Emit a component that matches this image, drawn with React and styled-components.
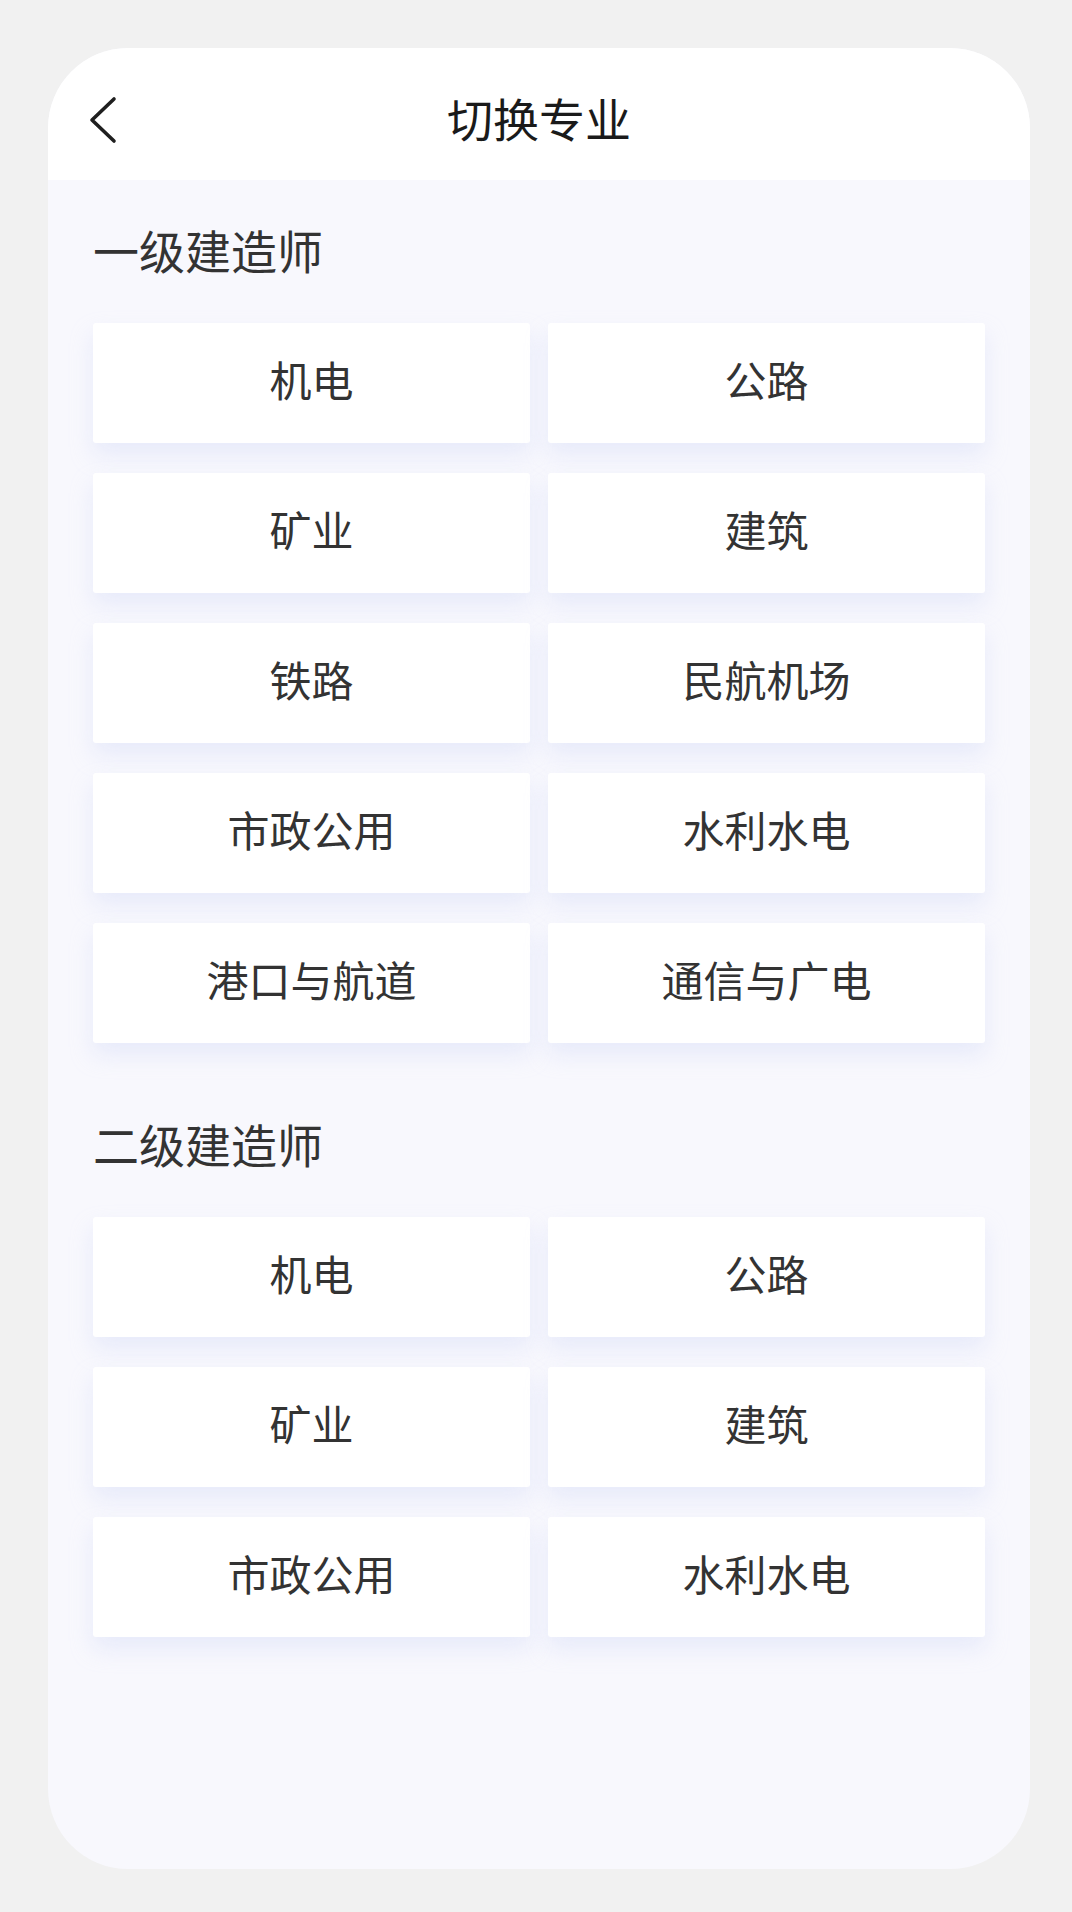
import React from "react";
import styled, { createGlobalStyle } from "styled-components";

const GlobalStyle = createGlobalStyle`
  html, body {
    margin: 0;
    padding: 0;
    background: #f1f1f1;
  }
  body {
    font-family: "Noto Sans CJK SC", "Noto Sans", sans-serif;
  }
`;

const sections = [
  {
    title: "一级建造师",
    items: ["机电", "公路", "矿业", "建筑", "铁路", "民航机场", "市政公用", "水利水电", "港口与航道", "通信与广电"],
  },
  {
    title: "二级建造师",
    items: ["机电", "公路", "矿业", "建筑", "市政公用", "水利水电"],
  },
];

export default function App() {
  return (
    <>
      <GlobalStyle />
      <Page>
        <Screen>
          <Header>
            <BackButton aria-label="返回">
              <svg width="30" height="48" viewBox="0 0 30 48" fill="none">
                <polyline
                  points="26,3 4,24 26,45"
                  stroke="#1f1f1f"
                  strokeWidth="3.6"
                  strokeLinecap="round"
                  strokeLinejoin="round"
                />
              </svg>
            </BackButton>
            <Title>切换专业</Title>
          </Header>
          <Content>
            {sections.map((section) => (
              <Section key={section.title}>
                <SectionTitle>{section.title}</SectionTitle>
                <Grid>
                  {section.items.map((item, i) => (
                    <Tile key={section.title + i}>{item}</Tile>
                  ))}
                </Grid>
              </Section>
            ))}
          </Content>
        </Screen>
      </Page>
    </>
  );
}

const Page = styled.div`
  padding: 48px 42px 43px 48px;
`;

const Screen = styled.div`
  width: 982px;
  height: 1821px;
  background: #f8f8fd;
  border-radius: 80px;
  overflow: hidden;
  display: flex;
  flex-direction: column;
`;

const Header = styled.div`
  position: relative;
  height: 132px;
  padding-top: 6px;
  box-sizing: border-box;
  background: #ffffff;
  display: flex;
  align-items: center;
  justify-content: center;
`;

const BackButton = styled.div`
  position: absolute;
  left: 40px;
  top: 50%;
  margin-top: -18px;
  width: 30px;
  height: 48px;
  display: flex;
`;

const Title = styled.div`
  font-size: 46px;
  line-height: 64px;
  color: #1a1a1a;
`;

const Content = styled.div`
  padding: 40px 45px 0;
  display: flex;
  flex-direction: column;
  gap: 71px;
`;

const Section = styled.div`
  display: flex;
  flex-direction: column;
`;

const SectionTitle = styled.div`
  font-size: 46px;
  line-height: 58px;
  color: #333333;
  margin-bottom: 45px;
`;

const Grid = styled.div`
  display: grid;
  grid-template-columns: 1fr 1fr;
  column-gap: 18px;
  row-gap: 30px;
`;

const Tile = styled.div`
  height: 120px;
  box-sizing: border-box;
  padding-bottom: 10px;
  background: #ffffff;
  border-radius: 3px;
  box-shadow: 0 12px 22px rgba(205, 212, 246, 0.38);
  display: flex;
  align-items: center;
  justify-content: center;
  font-size: 42px;
  color: #333333;
`;
